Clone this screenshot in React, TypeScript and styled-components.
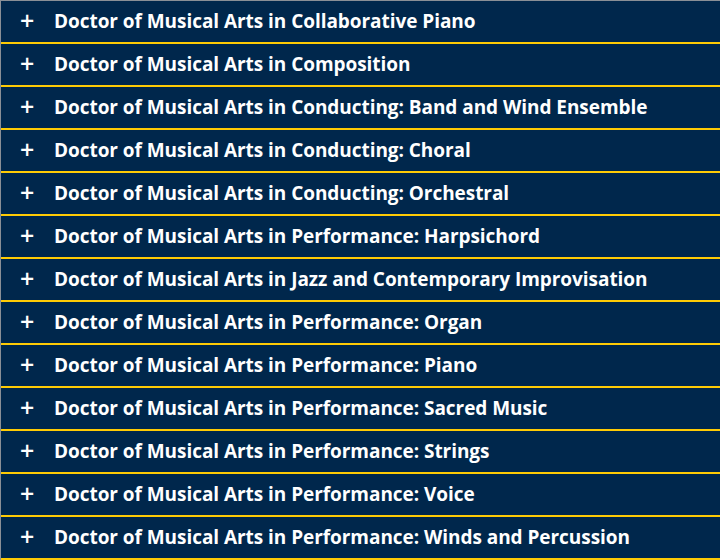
import styled, {createGlobalStyle} from "styled-components";

const GlobalStyle = createGlobalStyle`
    html, body {
        margin: 0;
        padding: 0;
        background: #ffffff;
    }
`;

const List = styled.div`
    width: 720px;
    height: 560px;
    overflow: hidden;
    border-top: 1px solid #8a8f96;
    border-left: 1px solid #8a8f96;
    box-sizing: border-box;
    font-family: "Open Sans", Lato, sans-serif;
`;

const Row = styled.div`
    display: flex;
    align-items: center;
    height: 43px;
    padding-bottom: 2px;
    box-sizing: border-box;
    background: #00274c;
    border-bottom: 2px solid #ffcb05;
    color: #ffffff;
    cursor: pointer;
`;

const Plus = styled.span`
    width: 53px;
    padding-left: 19px;
    box-sizing: border-box;
    font-size: 25px;
    font-weight: 600;
    line-height: 1;
`;

const Title = styled.span`
    font-size: 19px;
    font-weight: 700;
    letter-spacing: -0.05px;
`;

const programs = [
    "Doctor of Musical Arts in Collaborative Piano",
    "Doctor of Musical Arts in Composition",
    "Doctor of Musical Arts in Conducting: Band and Wind Ensemble",
    "Doctor of Musical Arts in Conducting: Choral",
    "Doctor of Musical Arts in Conducting: Orchestral",
    "Doctor of Musical Arts in Performance: Harpsichord",
    "Doctor of Musical Arts in Jazz and Contemporary Improvisation",
    "Doctor of Musical Arts in Performance: Organ",
    "Doctor of Musical Arts in Performance: Piano",
    "Doctor of Musical Arts in Performance: Sacred Music",
    "Doctor of Musical Arts in Performance: Strings",
    "Doctor of Musical Arts in Performance: Voice",
    "Doctor of Musical Arts in Performance: Winds and Percussion",
];

export default function App() {
    return (
        <>
            <GlobalStyle/>
            <List>
                {programs.map((name) => (
                    <Row key={name}>
                        <Plus>+</Plus>
                        <Title>{name}</Title>
                    </Row>
                ))}
            </List>
        </>
    );
}
